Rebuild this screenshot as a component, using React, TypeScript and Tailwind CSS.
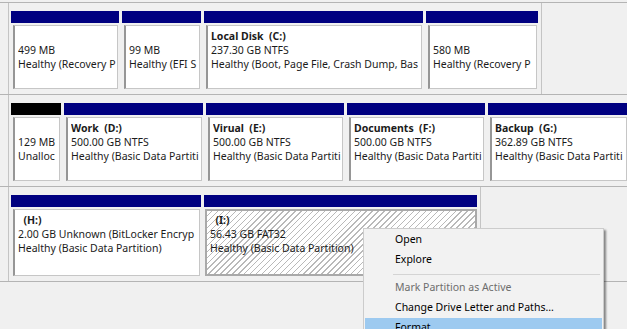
type Line = { text: string; bold?: boolean };

type Partition = {
  w: number;
  unalloc?: boolean;
  hatched?: boolean;
  lines: Line[];
};

// text is cut where the boxes cut it in Disk Management
const diskRows: { bodyH: string; end: boolean; parts: Partition[] }[] = [
  {
    bodyH: "h-[64px]",
    end: true,
    parts: [
      { w: 108, lines: [{ text: "" }, { text: "499 MB" }, { text: "Healthy (Recovery P" }] },
      { w: 79, lines: [{ text: "" }, { text: "99 MB" }, { text: "Healthy (EFI S" }] },
      {
        w: 219,
        lines: [
          { text: "Local Disk  (C:)", bold: true },
          { text: "237.30 GB NTFS" },
          { text: "Healthy (Boot, Page File, Crash Dump, Bas" },
        ],
      },
      { w: 112, lines: [{ text: "" }, { text: "580 MB" }, { text: "Healthy (Recovery P" }] },
    ],
  },
  {
    bodyH: "h-[64px]",
    end: false,
    parts: [
      { w: 50, unalloc: true, lines: [{ text: "" }, { text: "129 MB" }, { text: "Unalloc" }] },
      {
        w: 139,
        lines: [
          { text: "Work  (D:)", bold: true },
          { text: "500.00 GB NTFS" },
          { text: "Healthy (Basic Data Partiti" },
        ],
      },
      {
        w: 138,
        lines: [
          { text: "Virual  (E:)", bold: true },
          { text: "500.00 GB NTFS" },
          { text: "Healthy (Basic Data Partiti" },
        ],
      },
      {
        w: 138,
        lines: [
          { text: "Documents  (F:)", bold: true },
          { text: "500.00 GB NTFS" },
          { text: "Healthy (Basic Data Partiti" },
        ],
      },
      {
        w: 140,
        lines: [
          { text: "Backup  (G:)", bold: true },
          { text: "362.89 GB NTFS" },
          { text: "Healthy (Basic Data Partiti" },
        ],
      },
    ],
  },
  {
    bodyH: "h-[67px]",
    end: true,
    parts: [
      {
        w: 190,
        lines: [
          { text: "  (H:)", bold: true },
          { text: "2.00 GB Unknown (BitLocker Encryp" },
          { text: "Healthy (Basic Data Partition)" },
        ],
      },
      {
        w: 273,
        hatched: true,
        lines: [
          { text: "  (I:)", bold: true },
          { text: "56.43 GB FAT32" },
          { text: "Healthy (Basic Data Partition)" },
        ],
      },
    ],
  },
];

const menuItems = [
  { text: "Open" },
  { text: "Explore" },
  { sep: true, text: "" },
  { text: "Mark Partition as Active", disabled: true },
  { text: "Change Drive Letter and Paths..." },
  { text: "Format...", active: true },
];

function PartitionBox({ part, bodyH }: { part: Partition; bodyH: string }) {
  return (
    <div className="flex shrink-0 flex-col" style={{ width: part.w }}>
      <div className={part.unalloc ? "h-[12px] bg-black" : "h-[12px] bg-[#000080]"} />
      <div
        className={
          part.hatched
            ? `${bodyH} mt-[2px] ml-[1px] border-2 border-[#a9a9a9] bg-[repeating-linear-gradient(135deg,#ffffff_0px,#ffffff_3.2px,#b9b9b9_3.2px,#b9b9b9_4.2px)] pl-[3px] pt-[2px]`
            : `${bodyH} mt-[2px] ml-[2px] mr-[1px] border border-l-2 border-[#c6c6c6] border-l-[#969696] bg-white pl-[3px] pt-[3px]`
        }
      >
        {part.lines.map((line, i) => (
          <div
            key={"line" + i}
            className={
              "h-[14px] overflow-hidden whitespace-pre leading-[14px] " +
              (line.bold ? "font-bold" : "")
            }
          >
            {line.text}
          </div>
        ))}
      </div>
    </div>
  );
}

export default function App() {
  return (
    <div className="relative h-[329px] w-[627px] overflow-hidden bg-[#f0f0f0] pt-[2px] font-['Noto_Sans',sans-serif] text-[10.5px] text-[#1b1b1b]">
      <div className="border-t border-[#b4b4b4]">
        {diskRows.map((row, r) => (
          <div key={"row" + r} className="flex border-b border-[#b4b4b4]">
            <div className="w-[8px] shrink-0" />
            <div
              className={
                "flex shrink-0 gap-[3px] border-l border-[#c4c4c4] pt-[8px] pb-[5px] pl-[2px] " +
                (row.end ? "border-r pr-[3px]" : "")
              }
            >
              {row.parts.map((p, i) => (
                <PartitionBox key={"part" + r + i} part={p} bodyH={row.bodyH} />
              ))}
            </div>
          </div>
        ))}
      </div>

      <div className="absolute left-[363px] top-[228px] w-[241px] border border-[#cccccc] bg-[#f2f2f2] pt-[1px] text-[10.5px] shadow-[2px_2px_2px_rgba(0,0,0,0.45)]">
        {menuItems.map((item, i) =>
          item.sep ? (
            <div key={"m" + i} className="flex h-[8px] items-center pl-[29px] pr-[3px]">
              <div className="h-px w-full bg-[#d4d4d4]" />
            </div>
          ) : (
            <div
              key={"m" + i}
              className={
                "mx-[1px] flex h-[20px] items-center pl-[30px] " +
                (item.active ? "bg-[#9dcaf0] " : "") +
                (item.disabled ? "text-[#6d6d6d]" : "text-black")
              }
            >
              {item.text}
            </div>
          )
        )}
      </div>
    </div>
  );
}
